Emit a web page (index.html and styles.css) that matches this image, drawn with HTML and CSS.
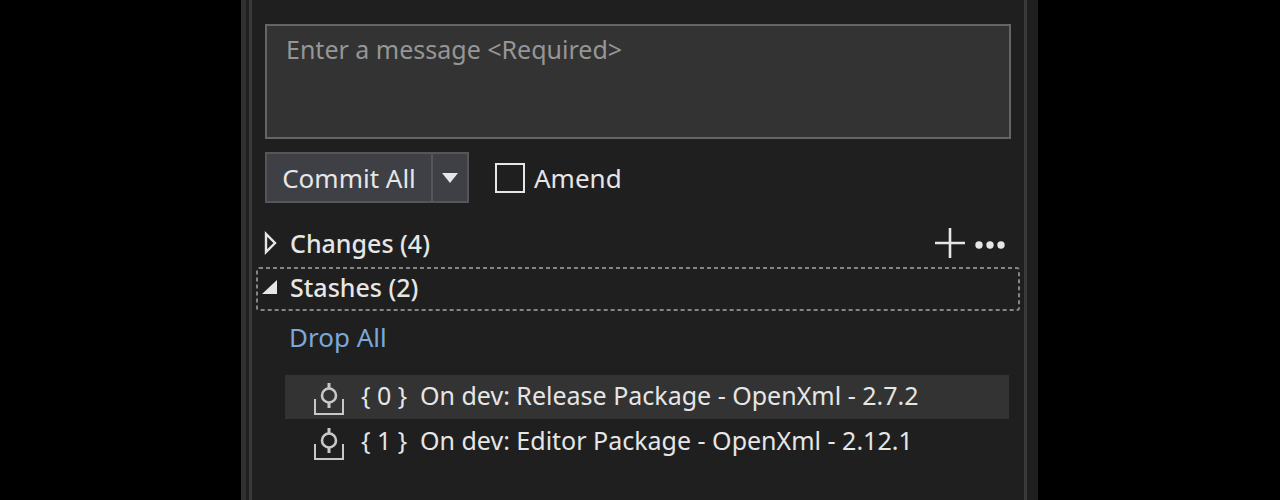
FILE: index.html
```html
<!DOCTYPE html>
<html lang="en">
<head>
<meta charset="utf-8">
<title>Git Changes</title>
<link rel="stylesheet" href="styles.css">
</head>
<body>
<main class="window">
  <div class="pane">
    <form class="commit">
      <textarea class="message" aria-label="Commit message" placeholder="Enter a message &lt;Required&gt;"></textarea>
      <div class="actions">
        <div class="split">
          <button class="split-main" type="button">Commit All</button>
          <button class="split-drop" type="button" aria-label="More commit options">
            <svg width="16" height="10" viewBox="0 0 16 10"><path d="M0 0H16L8 10Z" fill="currentColor"/></svg>
          </button>
        </div>
        <label class="amend"><input class="check" type="checkbox">Amend</label>
      </div>
    </form>
    <section class="section">
      <button class="toggle" type="button" aria-expanded="false">
        <svg width="15" height="24" viewBox="0 0 15 24"><path d="M4 3V21L13 12Z" fill="none" stroke="currentColor" stroke-width="2.4"/></svg>
        <span>Changes (4)</span>
      </button>
      <button class="tool" type="button" aria-label="Stage all">
        <svg width="30" height="30" viewBox="0 0 30 30"><path d="M15 0V30M0 15H30" stroke="currentColor" stroke-width="2.6"/></svg>
      </button>
      <button class="tool" type="button" aria-label="More actions">
        <svg width="30" height="30" viewBox="0 0 30 30" fill="currentColor"><circle cx="4" cy="17" r="3.7"/><circle cx="15" cy="17" r="3.7"/><circle cx="26" cy="17" r="3.7"/></svg>
      </button>
    </section>
    <section class="section focused">
      <button class="toggle" type="button" aria-expanded="true">
        <svg width="15" height="24" viewBox="0 0 15 24"><path d="M15 5V19H0Z" fill="currentColor"/></svg>
        <span>Stashes (2)</span>
      </button>
      <svg class="focus" width="100%" height="100%" aria-hidden="true"><rect class="focus-line" x="1" y="1" rx="2"/></svg>
    </section>
    <a class="drop" href="#">Drop All</a>
    <ul class="stashes">
      <li class="stash selected">
        <svg class="icon" width="30" height="34" viewBox="0 0 30 34" fill="none" stroke="currentColor"><path d="M1 16V31H29V16" stroke-width="2"/><circle cx="15" cy="12.5" r="7" stroke-width="2.6"/><path d="M15 0V6M15 19V25" stroke-width="3"/></svg>
        <span class="index">{ 0 }</span>
        <span>On dev: Release Package - OpenXml - 2.7.2</span>
      </li>
      <li class="stash">
        <svg class="icon" width="30" height="34" viewBox="0 0 30 34" fill="none" stroke="currentColor"><path d="M1 16V31H29V16" stroke-width="2"/><circle cx="15" cy="12.5" r="7" stroke-width="2.6"/><path d="M15 0V6M15 19V25" stroke-width="3"/></svg>
        <span class="index">{ 1 }</span>
        <span>On dev: Editor Package - OpenXml - 2.12.1</span>
      </li>
    </ul>
  </div>
</main>
</body>
</html>
```
FILE: styles.css
```css
* { box-sizing: border-box; }

body {
  margin: 0;
  padding: 0 242px 0 241px;
  background: #000;
  color: #e6e6e6;
  font: 25px/32px "Noto Sans", "Open Sans", sans-serif;
}

button, textarea {
  margin: 0;
  padding: 0;
  border: 0;
  background: none;
  color: inherit;
  font: inherit;
}

svg { display: block; flex: none; }

.window {
  min-height: 100vh;
  padding: 0 11px 0 3px;
  border-left: 5px solid #303030;
  background: #1f1f1f;
}

.pane {
  min-height: 100vh;
  padding: 24px 4px 0;
  border: solid #3a3a3a;
  border-width: 0 3px;
}

.commit { margin: 0 9px; }

.message {
  display: block;
  width: 100%;
  height: 115px;
  padding: 7px 19px;
  border: 2px solid #646469;
  background: #333;
  resize: none;
}

.message::placeholder { color: #969696; opacity: 1; }

.actions {
  display: flex;
  align-items: center;
  gap: 26px;
  margin-top: 13px;
  font-size: 26px;
}

.split {
  display: flex;
  height: 51px;
  border: 2px solid #55555a;
  background: #3f3f46;
}

.split-main { width: 164px; }

.split-drop {
  display: grid;
  place-items: center;
  width: 36px;
  border-left: 2px solid #55555a;
}

.amend { display: flex; align-items: center; gap: 9px; }

.check {
  appearance: none;
  width: 30px;
  height: 30px;
  margin: 0;
  border: 2px solid #e6e6e6;
}

.section {
  display: flex;
  align-items: center;
  gap: 10px;
  height: 44px;
  padding: 0 15px 4px 6px;
}

.commit + .section { margin-top: 20px; }

.toggle {
  display: flex;
  flex: 1;
  align-items: center;
  gap: 13px;
  font-weight: 500;
  text-align: left;
}

.focused { position: relative; }

.focus { position: absolute; inset: 0; }

.focus-line {
  width: calc(100% - 2px);
  height: calc(100% - 2px);
  fill: none;
  stroke: #858585;
  stroke-width: 2px;
  stroke-dasharray: 4 3;
}

.drop {
  display: inline-block;
  margin: 10px 33px 22px;
  color: #7aa7dc;
  font-size: 26px;
  text-decoration: none;
}

.stashes {
  display: grid;
  gap: 1px;
  margin: 0 11px 0 29px;
  padding: 0;
  list-style: none;
}

.stash {
  display: flex;
  align-items: center;
  height: 44px;
  padding: 0 0 4px 29px;
  white-space: nowrap;
}

.selected { background: #333; }

.icon { margin-top: 10px; color: #c8c8c8; }

.index { width: 76px; padding-left: 17px; }
```
